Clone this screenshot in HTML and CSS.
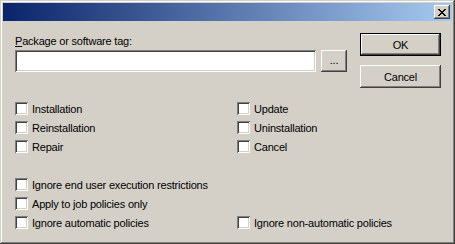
FILE: index.html
```html
<!DOCTYPE html>
<html lang="en">
<head>
    <meta charset="UTF-8">
    <title>Package Options</title>
    <link rel="stylesheet" href="styles.css">
</head>
<body>
    <div class="window">
        <div class="titlebar">
            <button type="button" class="close-btn" aria-label="Close">
                <svg width="8" height="7" viewBox="0 0 8 7" shape-rendering="crispEdges">
                    <path d="M0 0h2v1H0zM6 0h2v1H6zM1 1h2v1H1zM5 1h2v1H5zM2 2h4v1H2zM3 3h2v1H3zM2 4h4v1H2zM1 5h2v1H1zM5 5h2v1H5zM0 6h2v1H0zM6 6h2v1H6z" fill="#000"/>
                </svg>
            </button>
        </div>

        <div class="client">
            <div class="top">
                <div class="tag-field">
                    <label for="tag" class="field-label"><u>P</u>ackage or software tag:</label>
                    <div class="input-row">
                        <input type="text" id="tag" class="text-box" autocomplete="off">
                        <button type="button" class="btn browse-btn">...</button>
                    </div>
                </div>
                <div class="actions">
                    <button type="button" class="btn default-btn">OK</button>
                    <button type="button" class="btn">Cancel</button>
                </div>
            </div>

            <div class="options">
                <label class="check"><input type="checkbox"><span>Installation</span></label>
                <label class="check"><input type="checkbox"><span>Update</span></label>
                <label class="check"><input type="checkbox"><span>Reinstallation</span></label>
                <label class="check"><input type="checkbox"><span>Uninstallation</span></label>
                <label class="check"><input type="checkbox"><span>Repair</span></label>
                <label class="check"><input type="checkbox"><span>Cancel</span></label>
            </div>

            <div class="options flags">
                <label class="check wide"><input type="checkbox"><span>Ignore end user execution restrictions</span></label>
                <label class="check wide"><input type="checkbox"><span>Apply to job policies only</span></label>
                <label class="check"><input type="checkbox"><span>Ignore automatic policies</span></label>
                <label class="check"><input type="checkbox"><span>Ignore non-automatic policies</span></label>
            </div>
        </div>
    </div>
</body>
</html>
```

FILE: styles.css
```css
body {
    margin: 0;
    padding: 0;
    font-family: "Liberation Sans", Arial, sans-serif;
    font-size: 11px;
    letter-spacing: -0.2px;
    color: #000;
    background-color: #d4d0c8;
}
.window {
    width: 455px;
    height: 244px;
    box-sizing: border-box;
    padding: 3px;
    background-color: #d4d0c8;
    box-shadow: inset -1px -1px #404040, inset 1px 1px #d4d0c8,
                inset -2px -2px #808080, inset 2px 2px #fff;
}
.titlebar {
    height: 18px;
    display: flex;
    justify-content: flex-end;
    align-items: center;
    padding-right: 2px;
    background: linear-gradient(to right, #0a246a, #a6caf0);
}
.close-btn {
    width: 16px;
    height: 14px;
    padding: 0;
    border: none;
    display: flex;
    align-items: center;
    justify-content: center;
    background-color: #d4d0c8;
    box-shadow: inset -1px -1px #404040, inset 1px 1px #fff,
                inset -2px -2px #808080, inset 2px 2px #d4d0c8;
}
.close-btn svg {
    display: block;
    margin-left: -1px;
}
.client {
    padding: 12px 11px 0 12px;
}
.top {
    display: flex;
    gap: 13px;
}
.tag-field {
    flex: 1;
    padding-top: 2px;
}
.field-label {
    display: block;
    line-height: 13px;
}
.input-row {
    display: flex;
    gap: 5px;
    margin-top: 2px;
}
.text-box {
    flex: 1;
    height: 22px;
    box-sizing: border-box;
    border: none;
    margin: 0;
    padding: 2px 4px;
    font: inherit;
    background-color: #fff;
    outline: none;
    box-shadow: inset 1px 1px #808080, inset -1px -1px #fff,
                inset 2px 2px #404040, inset -2px -2px #d4d0c8;
}
.btn {
    height: 23px;
    padding: 0;
    border: none;
    font: inherit;
    letter-spacing: inherit;
    color: #000;
    background-color: #d4d0c8;
    box-shadow: inset -1px -1px #404040, inset 1px 1px #fff,
                inset -2px -2px #808080, inset 2px 2px #d4d0c8;
}
.browse-btn {
    width: 26px;
    height: 22px;
    padding-bottom: 2px;
}
.actions {
    width: 81px;
    display: flex;
    flex-direction: column;
    gap: 9px;
}
.default-btn {
    box-shadow: inset 0 0 0 1px #000, inset -2px -2px #404040, inset 2px 2px #fff,
                inset -3px -3px #808080;
}
.options {
    display: grid;
    grid-template-columns: 222px 1fr;
    margin-top: 11px;
}
.flags {
    margin-top: 19px;
}
.check {
    height: 19px;
    display: flex;
    align-items: center;
    gap: 4px;
    white-space: nowrap;
}
.check.wide {
    grid-column: 1 / -1;
}
.check input {
    appearance: none;
    -webkit-appearance: none;
    width: 13px;
    height: 13px;
    margin: 0;
    background-color: #fff;
    box-shadow: inset 1px 1px #808080, inset -1px -1px #fff,
                inset 2px 2px #404040, inset -2px -2px #d4d0c8;
}
```
